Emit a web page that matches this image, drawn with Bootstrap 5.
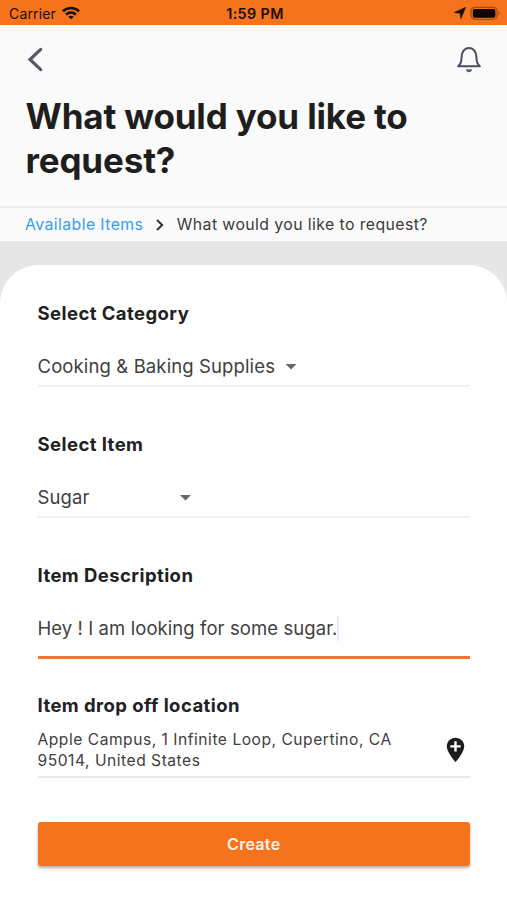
<!DOCTYPE html>
<html lang="en">
<head>
<meta charset="utf-8">
<meta name="viewport" content="width=device-width, initial-scale=1">
<title>What would you like to request?</title>
<link href="https://cdn.jsdelivr.net/npm/bootstrap@5.3.0/dist/css/bootstrap.min.css" rel="stylesheet">
<style>
body{font-family:Inter,"Liberation Sans",sans-serif;background:#e6e6e6;color:#212121;height:900px}
svg{display:block;flex:none}
.status-bar{height:25px;background:#f4731c;color:#1c0d03;font-size:14px;line-height:25px;padding:1px 6px 0 9px}
.status-bar .side{flex:1 1 0}
.carrier{letter-spacing:.15px}
.wifi{margin-left:6px}
.clock{font-weight:600;font-size:14.3px;letter-spacing:.4px}
.page-head{height:183px;background:#fafafa;border-bottom:2px solid #efefef;padding:19px 25px 0 26px}
.page-title{font-size:35px;font-weight:700;line-height:44px;letter-spacing:-.15px;margin:20px 0 0 -.5px;color:#1e1e1e}
.crumbs{height:33px;background:#fafafa;padding:0 25px;font-size:15.8px;letter-spacing:.42px;color:#3a3a3a}
.crumbs a{color:#3b9dea}
.crumb-sep{margin:0 12px 0 11.5px}
.sheet{margin-top:24px;height:635px;background:#fff;border-radius:38px 38px 0 0;padding:36px 37px 0 37.5px}
.field-label{font-size:18.5px;font-weight:700;letter-spacing:.43px;line-height:24px;margin:0;color:#212121}
.field-row{height:50px;margin-top:12px;margin-bottom:45px;border-bottom:2px solid #f0f0f0;font-size:18.5px;letter-spacing:.12px;color:#404040;padding-top:11px}
.field-row.active{height:60px;border-bottom:3px solid #ef7530;margin-bottom:34px;padding-bottom:9px;letter-spacing:.08px}
.item-value{width:142px}
.caret-down{width:12px;height:6px;margin-left:10px;background:#686868;clip-path:polygon(0 0,100% 0,50% 100%)}
.cursor{width:2px;height:25px;background:#e5effc}
.address{font-size:15.6px;letter-spacing:.52px;line-height:21px;color:#404040;margin-bottom:44px;height:61px;border-bottom:2px solid #e8e8e8;padding:7px 5px 0 0}
.btn-create{height:44px;background:#f4731c;color:#fff3e9;font-size:16px;font-weight:600;letter-spacing:.3px;border:0;border-radius:3px;box-shadow:0 2px 3px rgba(0,0,0,.32)}
</style>
</head>
<body>
<div class="status-bar d-flex align-items-center">
  <div class="side d-flex align-items-center">
    <span class="carrier">Carrier</span>
    <svg class="wifi" width="18" height="14" viewBox="0 0 18 14" fill="none" stroke="#1c0d03" stroke-width="2.6"><path d="M1 5.2C5.5.9 12.5.9 17 5.2"/><path d="M4 8.6c2.9-2.7 7.1-2.7 10 0"/><path d="M9 13.3 6.3 10.7c1.5-1.4 3.9-1.4 5.4 0z" fill="#1c0d03" stroke="none"/></svg>
  </div>
  <span class="clock">1:59 PM</span>
  <div class="side d-flex align-items-center justify-content-end">
    <svg width="12" height="12" viewBox="0 0 12 12" fill="#1c0d03" stroke="#1c0d03" stroke-width=".8" stroke-linejoin="round"><path d="M11.4.6 6.9 11.4 6.2 6.2.6 5.5z"/></svg>
    <svg class="ms-1" width="31" height="15" viewBox="0 0 31 15"><rect x="1.1" y="1.3" width="26" height="12" rx="4" fill="none" stroke="#a34b12" stroke-width="1.3"/><rect x="2.8" y="2.9" width="22.6" height="8.8" rx="2" fill="#0d0500"/><path d="M28.6 5.2q2.4 2.1 0 4.3z" fill="#a34b12"/></svg>
  </div>
</div>
<header class="page-head">
  <div class="d-flex justify-content-between">
    <svg width="18" height="30" viewBox="0 0 18 30" fill="none" stroke="#555966" stroke-width="3.2" stroke-linecap="round"><path d="M14.7 5.4 4 15.5 14.7 25.6"/></svg>
    <svg width="26" height="30" viewBox="0 0 26 30" fill="none" stroke="#494d60" stroke-width="2" stroke-linecap="round" stroke-linejoin="round"><path d="M2.1 22.2c2.9-2 3.5-5.3 3.5-9.2 0-4.8 2.9-9.1 7.4-9.1s7.4 4.3 7.4 9.1c0 3.9.6 7.2 3.5 9.2z"/><path d="M10.5 26.2c.9 2.1 4.1 2.1 5 0z" fill="#494d60" stroke-width="1"/></svg>
  </div>
  <h1 class="page-title">What would you like to request?</h1>
</header>
<nav class="crumbs d-flex align-items-center">
  <a href="#" class="text-decoration-none">Available Items</a>
  <svg class="crumb-sep" width="10" height="14" viewBox="0 0 10 14" fill="none" stroke="#333" stroke-width="2"><path d="M2 2l5.2 5L2 12"/></svg>
  <span>What would you like to request?</span>
</nav>
<main class="sheet">
  <h2 class="field-label">Select Category</h2>
  <div class="field-row d-flex align-items-center"><span>Cooking &amp; Baking Supplies</span><span class="caret-down"></span></div>
  <h2 class="field-label">Select Item</h2>
  <div class="field-row d-flex align-items-center"><span class="item-value">Sugar</span><span class="caret-down ms-0"></span></div>
  <h2 class="field-label">Item Description</h2>
  <div class="field-row active d-flex align-items-center"><span>Hey ! I am looking for some sugar.</span><span class="cursor"></span></div>
  <h2 class="field-label">Item drop off location</h2>
  <div class="address d-flex justify-content-between align-items-center">
    <div>Apple Campus, 1 Infinite Loop, Cupertino, CA<br>95014, United States</div>
    <svg width="19" height="26" viewBox="0 0 19 26"><path d="M9.5.8C4.7.8.8 4.6.8 9.3c0 6.3 8.7 15.8 8.7 15.8s8.7-9.5 8.7-15.8C18.2 4.6 14.3.8 9.5.8z" fill="#1c1c1c"/><path d="M9.5 4.2v10.4M4.3 9.4h10.4" stroke="#fff" stroke-width="2.4"/></svg>
  </div>
  <button type="button" class="btn btn-create w-100 p-0">Create</button>
</main>
<script src="https://cdn.jsdelivr.net/npm/bootstrap@5.3.0/dist/js/bootstrap.bundle.min.js"></script>
</body>
</html>
